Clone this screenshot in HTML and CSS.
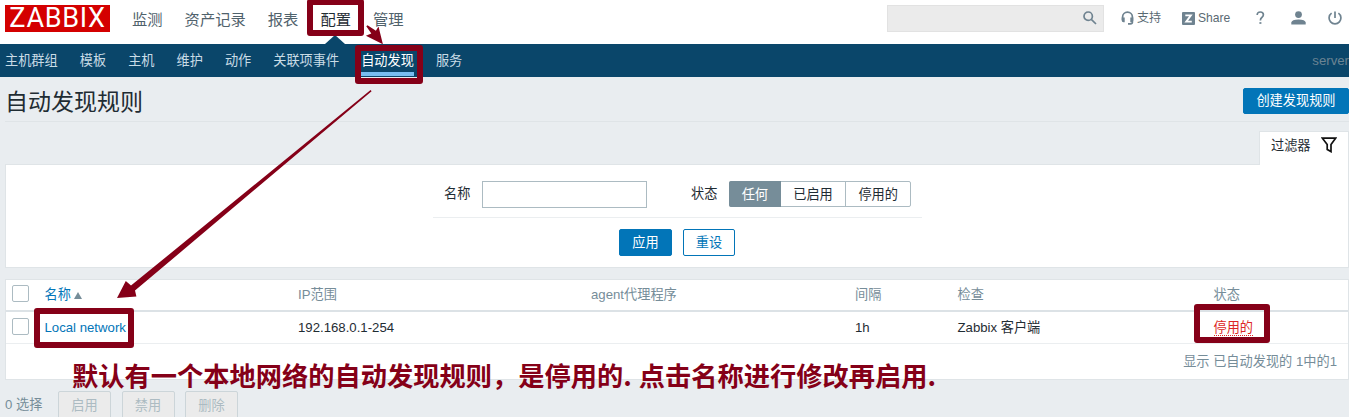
FILE: index.html
```html
<!DOCTYPE html>
<html lang="zh-CN">
<head>
<meta charset="utf-8">
<title>自动发现规则</title>
<link rel="stylesheet" href="styles.css">
</head>
<body>
<header class="top">
  <div class="logo"><span>ZABBIX</span></div>
  <nav class="main-nav">
    <a>监测</a><a>资产记录</a><a>报表</a><a class="active">配置</a><a>管理</a>
  </nav>
  <div class="search">
    <svg width="14" height="14" viewBox="0 0 14 14"><circle cx="5.2" cy="5.2" r="4.2"/><path d="M8.3 8.3L13 13"/></svg>
  </div>
  <div class="tools">
    <a class="support"><svg width="13" height="14" viewBox="0 0 13 14"><path d="M1.6 9V6a4.9 4.9 0 0 1 9.8 0v5.2q0 1.6-2 1.6H7"/><path class="fill" d="M.7 6.4h3v4.8h-1.2Q.7 11 .7 9.5zM12.3 6.4h-3v4.8h1.2q1.8-.2 1.8-1.7z"/></svg>支持</a>
    <a class="share"><svg width="13" height="13" viewBox="0 0 13 13"><rect class="fill" width="13" height="13" rx="1"/><path class="z" d="M3.3 3.4h5.6L4.2 9.6h5.6"/></svg>Share</a>
    <a class="help"><svg width="9" height="14" viewBox="0 0 9 14"><path d="M1.2 4Q1.2 1 4.3 1q3.1 0 3.1 2.8 0 1.5-1.6 2.7Q4.4 7.5 4.4 9.4"/><path d="M3.4 12h2"/></svg></a>
    <a class="user"><svg width="15" height="14" viewBox="0 0 15 14"><circle class="fill" cx="7.5" cy="3.6" r="3.4"/><path class="fill" d="M.3 13.5v-2Q.8 8.6 7.5 8.6t7.2 2.9v2z"/></svg></a>
    <a class="power"><svg width="14" height="14" viewBox="0 0 14 14"><path d="M7 .5v6.5M3.6 2.1a5.9 5.9 0 1 0 6.8 0"/></svg></a>
  </div>
</header>
<nav class="sub-nav">
  <a>主机群组</a><a>模板</a><a>主机</a><a>维护</a><a>动作</a><a>关联项事件</a><a class="selected">自动发现</a><a>服务</a>
  <span class="server">server</span>
</nav>
<main>
  <div class="title-row">
    <h1>自动发现规则</h1>
    <button class="btn create">创建发现规则</button>
  </div>
  <div class="tab-row">
    <div class="filter-tab">过滤器<svg width="16" height="16" viewBox="0 0 16 16"><path d="M1.4 1.2h13.2L10 7.6v7L6.2 12.4V7.6z"/></svg></div>
  </div>
  <section class="filter">
    <div class="filter-fields">
      <label>名称</label><div class="input"></div>
      <label class="state-label">状态</label>
      <div class="segments"><span class="on">任何</span><span>已启用</span><span>停用的</span></div>
    </div>
    <div class="filter-actions"><button class="btn">应用</button><button class="btn alt">重设</button></div>
  </section>
  <section class="table">
    <div class="row head">
      <i class="check"></i><span class="sort">名称<b></b></span><span>IP范围</span><span>agent代理程序</span><span>间隔</span><span>检查</span><span>状态</span>
    </div>
    <div class="row">
      <i class="check"></i><span class="link">Local network</span><span>192.168.0.1-254</span><span></span><span>1h</span><span>Zabbix 客户端</span><span><em>停用的</em></span>
    </div>
    <div class="stats">显示 已自动发现的 1中的1</div>
  </section>
  <footer class="bulk"><span>0 选择</span><button>启用</button><button>禁用</button><button>删除</button></footer>
</main>
<svg class="marks" width="1349" height="417" viewBox="0 0 1349 417">
  <g class="boxes">
    <rect x="310" y="2" width="51" height="31"/>
    <rect x="358" y="48" width="62" height="33"/>
    <rect x="37" y="311" width="94" height="34"/>
    <rect x="1197" y="307" width="70" height="33"/>
  </g>
  <path d="M366.3 26.2l1.2-1 8.4 5.6 2.6-4.2 4.4 17.6-17-8.4 5.4-2.4z"/>
  <path d="M370.6 90l1 1.2L135 290.6l1.4 5.9L117 298l8.8-17 5.2 4.6z"/>
</svg>
<p class="note">默认有一个本地网络的自动发现规则，是停用的<span>.</span>点击名称进行修改再启用.</p>
</body>
</html>
```
FILE: styles.css
```css
* { box-sizing: border-box; }
body {
  margin: 0;
  width: 1349px;
  height: 417px;
  overflow: hidden;
  position: relative;
  background: #e9edf0;
  color: #1f2c33;
  font: 13.2px/18px "Liberation Sans", "Noto Sans CJK SC", sans-serif;
  white-space: nowrap;
}
button { font: inherit; padding: 0; }
.top { display: flex; height: 44px; background: #fff; padding: 5px 0 0 5px; }
.logo {
  width: 105px; height: 27px; background: #d40000; color: #fff;
  display: flex; align-items: center; justify-content: center;
  font: 27px/27px Roboto, "Liberation Sans", sans-serif;
  letter-spacing: .7px;
}
.main-nav { display: flex; gap: 22px; padding-left: 22px; width: 777px; font-size: 15.3px; line-height: 29px; color: #50626c; }
.main-nav .active { color: #1f2c33; position: relative; }
.main-nav .active::after {
  content: ""; position: absolute; left: 5px; top: 30px;
  border: 10px solid transparent; border-top: 0; border-bottom: 9px solid #0a466a;
}
.search { width: 217px; height: 27px; background: #ebebeb; border: 1px solid #e2e2e2; padding: 5px 6px; display: flex; justify-content: flex-end; }
svg { fill: none; stroke: #6f8390; stroke-width: 1.7; display: block; flex: none; }
svg .fill { fill: #6f8390; stroke: none; }
svg .z { stroke: #fff; stroke-width: 1.8; }
.tools { display: flex; align-items: center; height: 26px; color: #5a6a73; font-size: 12.1px; }
.tools a { display: flex; align-items: center; gap: 3px; }
.support { margin-left: 17px; width: 61px; }
.share { width: 74px; }
.help { width: 35px; }
.user { width: 37px; }
.sub-nav { height: 33px; background: #0a466a; display: flex; gap: 22px; padding-left: 5px; color: #c9dce6; line-height: 34px; }
.sub-nav .selected { color: #fff; height: 32px; border-bottom: 4px solid #78bdf0; }
.server { margin-left: auto; color: #6b8493; }
main { padding-left: 5px; }
.title-row { height: 45px; border-bottom: 1px solid #dfe4e7; display: flex; justify-content: space-between; }
h1 { margin: 0; font-size: 23px; line-height: 50px; font-weight: 400; }
.btn { background: #0275b8; border: 1px solid #0275b8; border-radius: 2px; color: #fff; width: 53px; height: 27px; }
.btn.alt { background: #fff; color: #0275b8; width: 52px; }
.btn.create { width: 106px; height: 26px; margin-top: 11px; }
.tab-row { height: 43px; padding-top: 9px; display: flex; justify-content: flex-end; }
.filter-tab {
  width: 90px; height: 34px; background: #fff; border: 1px solid #dfe4e7; border-bottom: 0;
  padding: 0 11px 6px; display: flex; align-items: center; justify-content: space-between;
  position: relative; z-index: 1;
}
.filter-tab svg { stroke: #111; margin-top: -2px; }
.filter { height: 104px; margin-top: -1px; background: #fff; border: 1px solid #dfe4e7; }
.filter-fields { width: 489px; height: 53px; margin-left: 427px; padding: 16px 0 0 11px; display: flex; border-bottom: 1px solid #ebeef0; }
.filter-fields label { width: 38px; line-height: 25px; }
.input { width: 165px; height: 27px; border: 1px solid #acbbc2; }
.filter-fields .state-label { margin-left: 44px; }
.segments { display: flex; height: 26px; width: 182px; border: 1px solid #acbbc2; border-radius: 2px; line-height: 25px; text-align: center; }
.segments span { width: 65px; }
.segments span + span + span { border-left: 1px solid #acbbc2; }
.segments .on { width: 52px; margin: -1px 0 -1px -1px; line-height: 27px; border-radius: 2px 0 0 2px; background: #768d99; color: #fff; }
.filter-actions { display: flex; gap: 11px; padding: 11px 0 0 613px; }
.table { margin-top: 11px; height: 101px; background: #fff; border: 1px solid #dfe4e7; }
.row { display: grid; grid-template-columns: 32.5px 253.5px 293px 264px 102.5px 256px 1fr; height: 32px; padding-left: 6px; line-height: 31px; border-bottom: 1px solid #ebeef0; }
.head { color: #768d99; border-bottom: 2px solid #dce2e6; line-height: 29px; }
.check { width: 17px; height: 17px; margin-top: 5px; border: 1px solid #acbbc2; border-radius: 2px; background: #fff; }
.row:not(.head) .check { margin-top: 6px; }
.sort, .link { color: #0275b8; }
.sort b { display: inline-block; border: 4.5px solid transparent; border-top: 0; border-bottom: 7px solid #768d99; margin-left: 3px; }
em { font-style: normal; color: #dc2626; border-bottom: 1px dotted #dc2626; display: inline-block; line-height: 14px; }
.stats { text-align: right; padding-right: 11px; line-height: 35px; color: #768d99; }
.bulk { display: flex; margin-top: 11px; color: #768d99; line-height: 28px; }
.bulk span { width: 53px; }
.bulk button { width: 53px; height: 28px; margin-right: 10.5px; border: 1px solid #ccd5d9; border-radius: 2px; background: #ebebeb; color: #acbbc2; }
.marks { position: absolute; left: 0; top: 0; z-index: 2; fill: #850018; stroke: none; }
.boxes { fill: none; stroke: #850018; stroke-width: 6; stroke-linejoin: round; }
.note { position: absolute; z-index: 3; left: 72px; top: 357px; margin: 0; color: #850018; font: bold 26.25px/36px "Noto Sans CJK SC", sans-serif; }
.note span { display: inline-block; width: 15.5px; }
```
